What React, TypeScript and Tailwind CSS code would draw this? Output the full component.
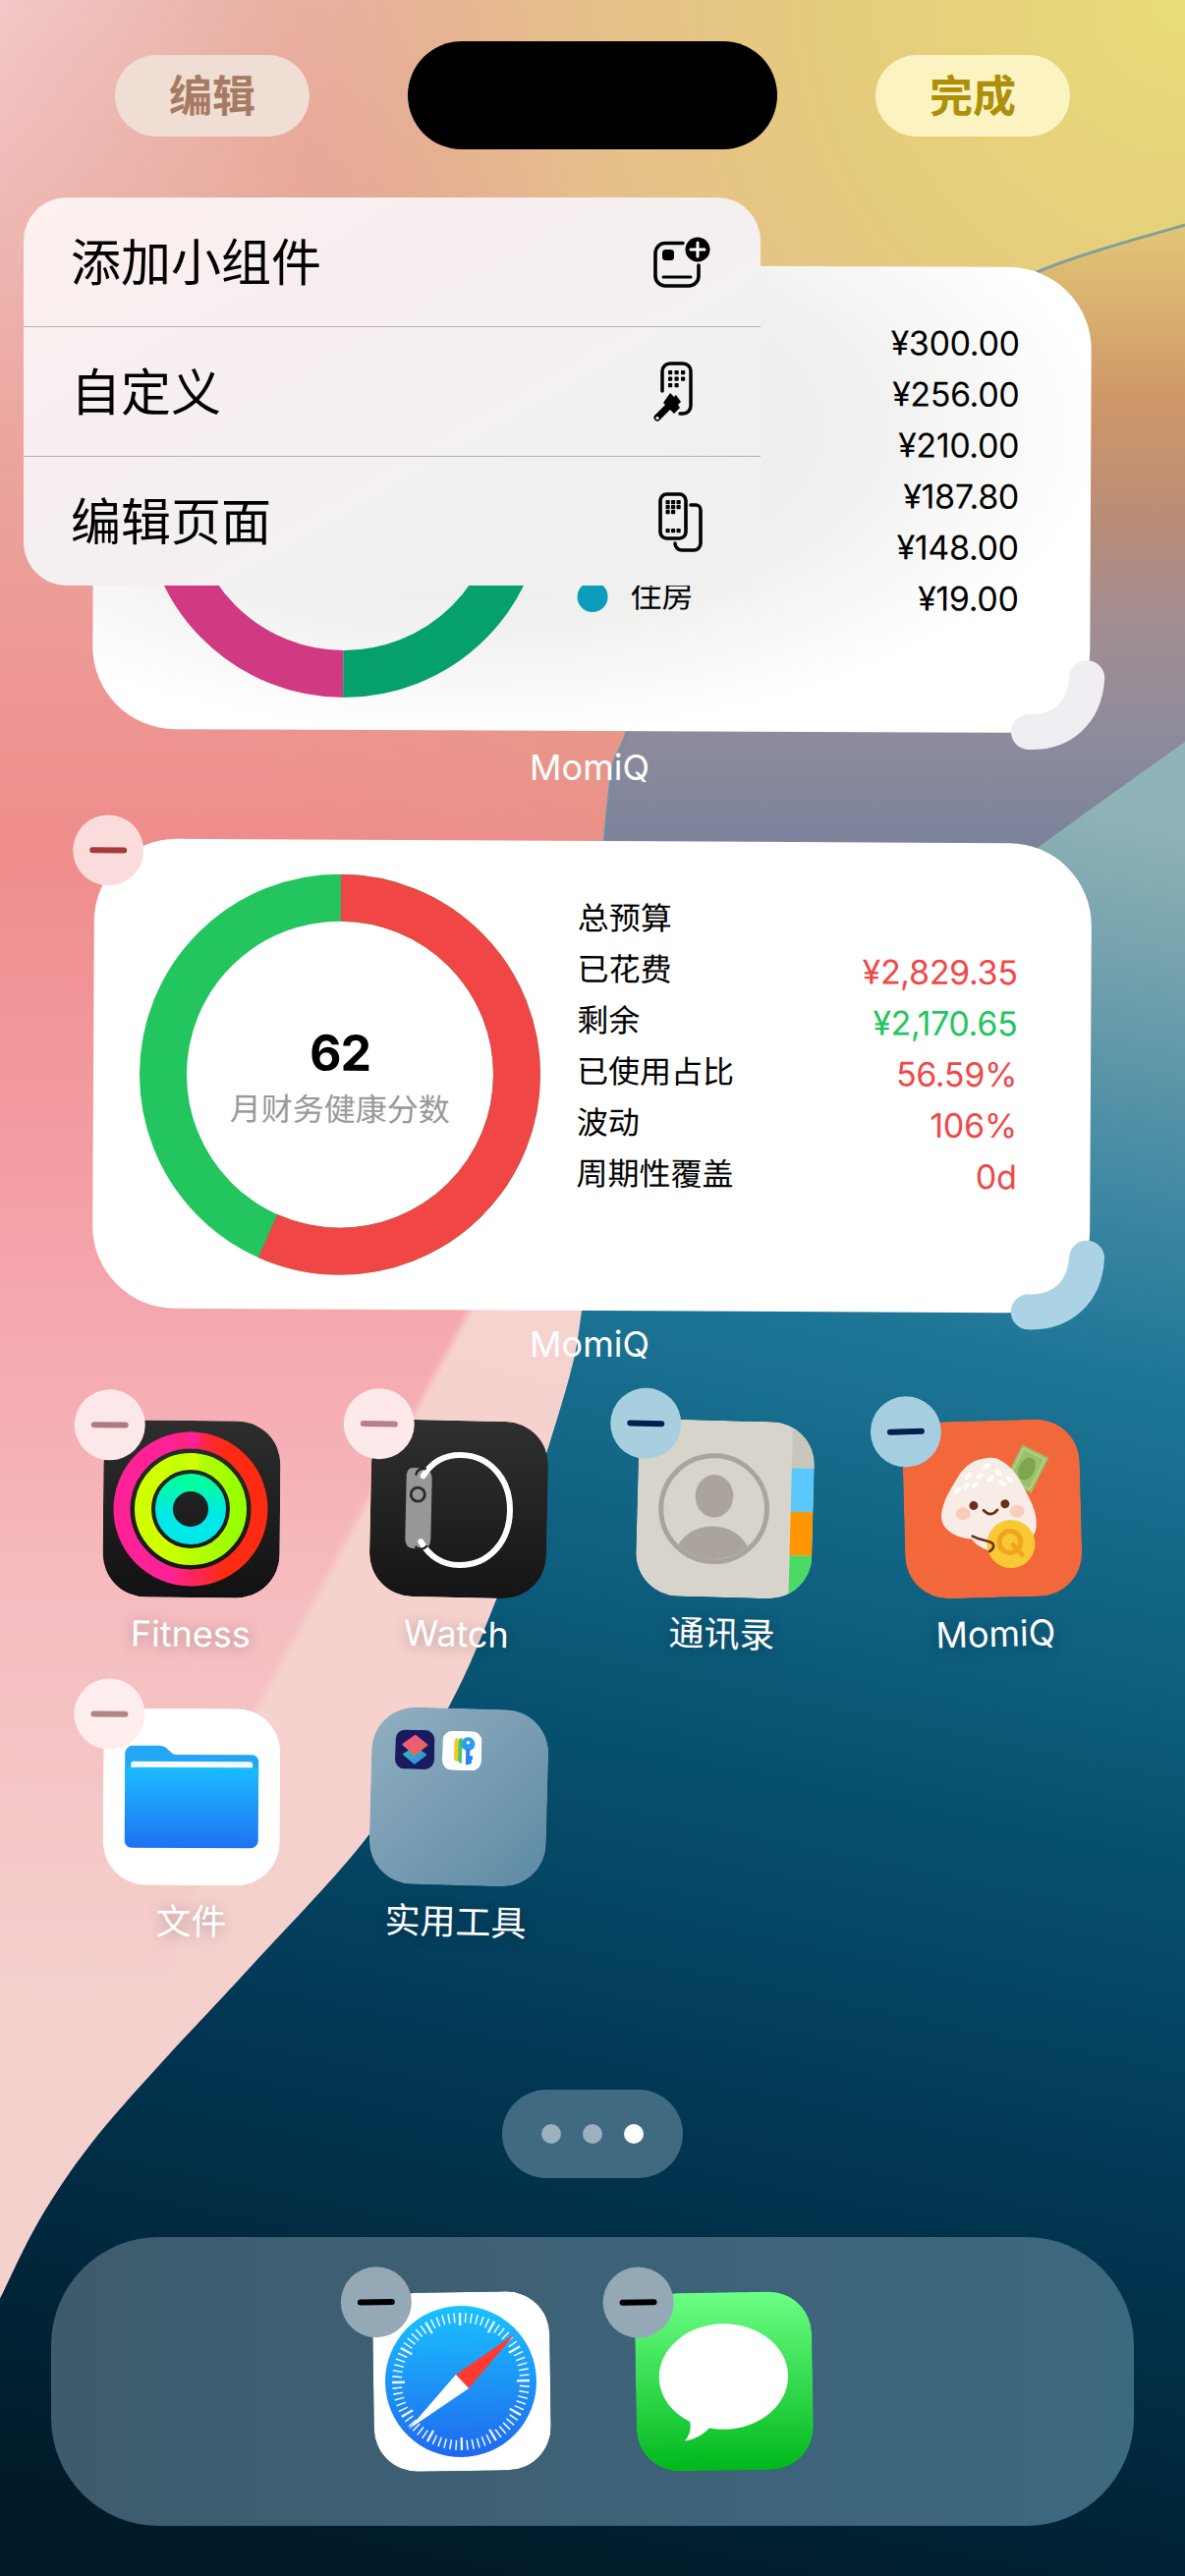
import React from "react";

type Pt = [number, number];

function spline(pts: Pt[]) {
  let d = `M${pts[0][0]} ${pts[0][1]}`;
  for (let i = 0; i < pts.length - 1; i++) {
    const p0 = pts[Math.max(i - 1, 0)];
    const p1 = pts[i];
    const p2 = pts[i + 1];
    const p3 = pts[Math.min(i + 2, pts.length - 1)];
    const c1x = p1[0] + (p2[0] - p0[0]) / 6;
    const c1y = p1[1] + (p2[1] - p0[1]) / 6;
    const c2x = p2[0] - (p3[0] - p1[0]) / 6;
    const c2y = p2[1] - (p3[1] - p1[1]) / 6;
    d += `C${c1x.toFixed(1)} ${c1y.toFixed(1)} ${c2x.toFixed(1)} ${c2y.toFixed(1)} ${p2[0]} ${p2[1]}`;
  }
  return d;
}

const upperEdge: Pt[] = [[1206, 229], [1060, 275], [900, 355], [780, 470], [690, 600], [638, 745], [621, 800], [604, 1000]];
const lowerEdge: Pt[] = [[592, 1335], [580, 1400], [540, 1530], [506, 1626], [457, 1737], [376, 1867], [257, 2000], [164, 2100], [92, 2183], [40, 2260], [0, 2340]];

function Minus({ bg, dash, pos }: { bg: string; dash: string; pos: string }) {
  return (
    <div className={`absolute z-10 flex h-[72px] w-[72px] items-center justify-center rounded-full ${bg} ${pos}`}>
      <div className={`h-[6px] w-[38px] rounded-full ${dash}`} />
    </div>
  );
}

function Handle({ color }: { color: string }) {
  return (
    <svg viewBox="0 0 100 100" className="absolute right-[-18px] bottom-[-24px] h-[100px] w-[100px]">
      <path d="M20 75C54 76 77 55 79 20" fill="none" stroke={color} strokeWidth="36" strokeLinecap="round" />
    </svg>
  );
}

function Wallpaper() {
  const edge = spline([...upperEdge, ...lowerEdge]);
  const deep = spline([[1206, 755], [1060, 860], [900, 980], [700, 1150], [600, 1280], ...lowerEdge]);
  return (
    <svg viewBox="0 0 1206 2622" className="absolute inset-0 h-[2622px] w-[1206px]">
      <defs>
        <linearGradient id="bgBase" x1="0" y1="0" x2="0" y2="2622" gradientUnits="userSpaceOnUse">
          <stop offset="0" stopColor="#f3c9ca" />
          <stop offset="0.16" stopColor="#eba8a0" />
          <stop offset="0.33" stopColor="#ef8c8c" />
          <stop offset="0.5" stopColor="#f5a5ad" />
          <stop offset="0.62" stopColor="#f5bcc0" />
          <stop offset="0.78" stopColor="#f5d1ce" />
          <stop offset="1" stopColor="#f5d1ce" />
        </linearGradient>
        <radialGradient id="bgSun" cx="1206" cy="0" r="1220" gradientUnits="userSpaceOnUse">
          <stop offset="0" stopColor="#e8dc78" />
          <stop offset="0.3" stopColor="#e5cb7d" />
          <stop offset="0.52" stopColor="#e6bf8b" stopOpacity="0.98" />
          <stop offset="0.75" stopColor="#e09a80" stopOpacity="0.55" />
          <stop offset="1" stopColor="#e09a80" stopOpacity="0" />
        </radialGradient>
        <linearGradient id="bgWave" x1="0" y1="229" x2="0" y2="900" gradientUnits="userSpaceOnUse">
          <stop offset="0" stopColor="#e2c676" />
          <stop offset="0.26" stopColor="#cf9868" />
          <stop offset="0.45" stopColor="#b98c78" />
          <stop offset="0.6" stopColor="#a38e92" />
          <stop offset="0.8" stopColor="#8a8a9c" />
          <stop offset="1" stopColor="#75809a" />
        </linearGradient>
        <linearGradient id="bgDeep" x1="900" y1="780" x2="520" y2="2622" gradientUnits="userSpaceOnUse">
          <stop offset="0" stopColor="#8fb3b6" />
          <stop offset="0.08" stopColor="#73a1ad" />
          <stop offset="0.2" stopColor="#3f88a3" />
          <stop offset="0.3" stopColor="#1c7596" />
          <stop offset="0.55" stopColor="#06506f" />
          <stop offset="0.75" stopColor="#023551" />
          <stop offset="1" stopColor="#001a28" />
        </linearGradient>
        <linearGradient id="bgPale" x1="500" y1="1300" x2="300" y2="2100" gradientUnits="userSpaceOnUse">
          <stop offset="0" stopColor="#f6d3cf" />
          <stop offset="1" stopColor="#f5d1ce" />
        </linearGradient>
        <filter id="soft" x="-10%" y="-10%" width="120%" height="120%">
          <feGaussianBlur stdDeviation="3" />
        </filter>
      </defs>
      <rect width="1206" height="2622" fill="url(#bgBase)" />
      <rect width="1206" height="2622" fill="url(#bgSun)" />
      <path d="M560 1180L250 1760L60 2400H700V1180Z" fill="url(#bgPale)" filter="url(#soft)" />
      <path d={`${edge}V2622H1206Z`} fill="url(#bgWave)" />
      <path d={`${deep}V2622H1206Z`} fill="url(#bgDeep)" />
      <path d={spline(upperEdge)} fill="none" stroke="#5f92a8" strokeWidth="3" opacity="0.75" />
    </svg>
  );
}

function FitnessIcon() {
  return (
    <svg viewBox="0 0 180 180" className="h-full w-full">
      <defs>
        <linearGradient id="fitBg" x1="0" y1="0" x2="0" y2="1">
          <stop offset="0" stopColor="#2e2e2e" />
          <stop offset="1" stopColor="#111" />
        </linearGradient>
        <linearGradient id="ringA" x1="0" y1="0" x2="1" y2="0">
          <stop offset="0.35" stopColor="#ff2296" />
          <stop offset="0.75" stopColor="#ff2a12" />
        </linearGradient>
        <linearGradient id="ringB" x1="0" y1="0" x2="1" y2="0">
          <stop offset="0.2" stopColor="#d0ff00" />
          <stop offset="1" stopColor="#98ff00" />
        </linearGradient>
        <linearGradient id="ringC" x1="0" y1="0" x2="0" y2="1">
          <stop offset="0" stopColor="#00ffa0" />
          <stop offset="0.6" stopColor="#00e8e8" />
        </linearGradient>
      </defs>
      <rect width="180" height="180" rx="44" fill="url(#fitBg)" />
      <circle cx="89" cy="90" r="70" fill="none" stroke="url(#ringA)" strokeWidth="17" />
      <circle cx="89" cy="90" r="48.5" fill="none" stroke="url(#ringB)" strokeWidth="17" />
      <circle cx="89" cy="90" r="27" fill="none" stroke="url(#ringC)" strokeWidth="18" />
      <circle cx="90" cy="20" r="8.5" fill="#ff2296" />
      <circle cx="90" cy="41.5" r="8.5" fill="#cfff00" />
      <circle cx="90" cy="63" r="9" fill="#00ffa0" />
    </svg>
  );
}

function WatchIcon() {
  return (
    <svg viewBox="0 0 180 180" className="h-full w-full">
      <defs>
        <linearGradient id="watchBg" x1="0" y1="0" x2="0" y2="1">
          <stop offset="0" stopColor="#303030" />
          <stop offset="1" stopColor="#151515" />
        </linearGradient>
      </defs>
      <rect width="180" height="180" rx="44" fill="url(#watchBg)" />
      <path d="M42 49H50C58 49 62 53 62 60V118C62 128 60 131 52 131H44C39 131 36 127 36 121V58C36 53 38 49 42 49Z" fill="#979797" />
      <circle cx="48" cy="76" r="7" fill="#979797" stroke="#2b2b2b" strokeWidth="2.8" />
      <path d="M53 57C62 42 76 35 91 35C120 35 142 58 142 91C142 124 120 147 91 147C76 147 62 140 52 124" fill="none" stroke="#fff" strokeWidth="6" strokeLinecap="round" />
      <circle cx="53" cy="57" r="7.5" fill="none" stroke="#222" strokeWidth="2.4" strokeDasharray="14 30" strokeDashoffset="-24" />
      <circle cx="52" cy="124" r="7.5" fill="none" stroke="#222" strokeWidth="2.4" strokeDasharray="14 30" strokeDashoffset="-4" />
    </svg>
  );
}

function ContactsIcon() {
  return (
    <svg viewBox="0 0 181 182" className="h-full w-full">
      <defs>
        <clipPath id="ctClip">
          <rect width="181" height="182" rx="44" />
        </clipPath>
        <clipPath id="ctFace">
          <circle cx="79" cy="91" r="52" />
        </clipPath>
      </defs>
      <g clipPath="url(#ctClip)">
        <rect width="181" height="182" fill="#d7d4cb" />
        <rect x="158" y="0" width="23" height="47" fill="#c9c6bc" />
        <rect x="158" y="47" width="23" height="45" fill="#5ac8fa" />
        <rect x="158" y="92" width="23" height="45" fill="#ff9500" />
        <rect x="158" y="137" width="23" height="45" fill="#4cd964" />
      </g>
      <circle cx="79" cy="91" r="54.5" fill="none" stroke="#aaa49c" strokeWidth="5" />
      <ellipse cx="79" cy="78" rx="19.5" ry="22" fill="#aaa49c" />
      <g clipPath="url(#ctFace)">
        <ellipse cx="79" cy="145" rx="40" ry="36" fill="#aaa49c" />
      </g>
    </svg>
  );
}

function MomiIcon() {
  const grains = [
    [85, 46, -30], [66, 56, -40], [78, 56, -30], [97, 53, 30], [108, 60, 35], [89, 59, -30], [101, 64, 30], [64, 66, -40], [73, 65, -35], [55, 70, -40],
  ];
  return (
    <svg viewBox="0 0 180 180" className="h-full w-full">
      <rect width="180" height="180" rx="44" fill="#f2683a" />
      <g transform="rotate(28 126 50)">
        <rect x="111" y="30" width="30" height="40" fill="#9cc06b" />
        <rect x="114" y="33" width="24" height="34" fill="none" stroke="#b9d488" strokeWidth="1.5" />
        <ellipse cx="126" cy="50" rx="8" ry="12" fill="#7ea650" />
      </g>
      <path d="M86 38C102 36 115 52 122 68C130 84 136 96 134 110C132 125 115 133 100 133C88 135 75 130 68 120C50 118 36 108 38 94C40 80 48 68 56 56C64 44 74 39 86 38Z" fill="#f8ede6" />
      {grains.map(([x, y, r], i) => (
        <ellipse key={i} cx={x} cy={y} rx="4" ry="2.2" fill="#fff" transform={`rotate(${r} ${x} ${y})`} />
      ))}
      <ellipse cx="60" cy="94" rx="7.5" ry="6.5" fill="#f9cdbb" />
      <ellipse cx="115" cy="93" rx="7.5" ry="6.5" fill="#f9cdbb" />
      <circle cx="71" cy="86" r="4.5" fill="#6b2f1c" />
      <circle cx="103" cy="85" r="4.5" fill="#6b2f1c" />
      <path d="M81 91Q88 99 95 91" fill="none" stroke="#6b2f1c" strokeWidth="2.8" strokeLinecap="round" />
      <circle cx="108" cy="126" r="24.5" fill="#f9c933" />
      <circle cx="107" cy="124" r="11" fill="none" stroke="#f0a51f" strokeWidth="5" />
      <path d="M110 127L119 137" stroke="#f0a51f" strokeWidth="5" strokeLinecap="round" />
      <path d="M69 117C76 121 82 121 88 124C92 127 90 131 86 133" fill="none" stroke="#6b2f1c" strokeWidth="2.6" strokeLinecap="round" />
    </svg>
  );
}

function FilesIcon() {
  return (
    <svg viewBox="0 0 180 180" className="h-full w-full">
      <defs>
        <linearGradient id="fileFront" x1="0" y1="60" x2="0" y2="142" gradientUnits="userSpaceOnUse">
          <stop offset="0" stopColor="#1bbcff" />
          <stop offset="1" stopColor="#1e72f2" />
        </linearGradient>
      </defs>
      <rect width="180" height="180" rx="44" fill="#fff" />
      <path d="M22 47C22 42 25 38 30 38H56C60 38 63 39 66 42C69 45 71 47 76 47H151C155 47 158 50 158 54V70H22Z" fill="#22a6f5" />
      <rect x="28" y="54" width="124" height="10" rx="3" fill="#f4fbff" />
      <path d="M22 60H158V134C158 139 154 142 150 142H30C25 142 22 139 22 134Z" fill="url(#fileFront)" />
    </svg>
  );
}

function FolderIcon() {
  return (
    <div className="h-full w-full rounded-[44px] bg-gradient-to-br from-[#92afc0] to-[#5d8aa5]">
      <div className="flex gap-[8px] pt-[23px] pl-[24px]">
        <svg viewBox="0 0 40 40" className="h-[40px] w-[40px]">
          <defs>
            <linearGradient id="scTop" x1="0" y1="0" x2="1" y2="1">
              <stop offset="0" stopColor="#f0568f" />
              <stop offset="1" stopColor="#e8694a" />
            </linearGradient>
            <linearGradient id="scBottom" x1="0" y1="0" x2="1" y2="1">
              <stop offset="0" stopColor="#2bc7b5" />
              <stop offset="1" stopColor="#3a7fe8" />
            </linearGradient>
          </defs>
          <rect width="40" height="40" rx="10" fill="#1a1a5e" />
          <path d="M20 18L31 25L20 34L9 25Z" fill="url(#scBottom)" stroke="url(#scBottom)" strokeWidth="2" strokeLinejoin="round" />
          <path d="M20 6L32 15L20 25L8 15Z" fill="url(#scTop)" stroke="url(#scTop)" strokeWidth="2" strokeLinejoin="round" />
        </svg>
        <svg viewBox="0 0 40 40" className="h-[40px] w-[40px]">
          <rect width="40" height="40" rx="10" fill="#fff" />
          <path d="M12 11C12 8 14 7 16 7V31C14 31 12 30 12 28Z" fill="#f8c42c" />
          <path d="M16 11C16 8 18 7 20 7V33C18 33 16 31 16 29Z" fill="#4cc75a" />
          <circle cx="26" cy="13" r="7" fill="#2b9df5" />
          <circle cx="26" cy="11.5" r="1.8" fill="#fff" />
          <path d="M26 18V34M26 27H31M26 31H30" stroke="#2b82f5" strokeWidth="4" />
        </svg>
      </div>
    </div>
  );
}

function SafariIcon() {
  const ticks = Array.from({ length: 72 }, (_, i) => i * 5);
  return (
    <svg viewBox="0 0 180 182" className="h-full w-full">
      <defs>
        <linearGradient id="sfBg" x1="0" y1="0" x2="0" y2="1">
          <stop offset="0" stopColor="#1ac2ff" />
          <stop offset="1" stopColor="#1f68ee" />
        </linearGradient>
      </defs>
      <rect width="180" height="182" rx="44" fill="#fff" />
      <circle cx="89" cy="91" r="77" fill="url(#sfBg)" />
      {ticks.map((a) => (
        <line key={a} x1="89" y1="21" x2="89" y2={a % 30 === 0 ? 34 : 31} stroke="#fff" strokeOpacity="0.9" strokeWidth={a % 30 === 0 ? 2.4 : 1.6} transform={`rotate(${a} 89 91)`} />
      ))}
      <path d="M145 43L84 84L97 98Z" fill="#ff3b30" />
      <path d="M35 139L84 84L97 98Z" fill="#fff" />
    </svg>
  );
}

function MessagesIcon() {
  return (
    <svg viewBox="0 0 181 182" className="h-full w-full">
      <defs>
        <linearGradient id="msgBg" x1="0" y1="0" x2="0" y2="1">
          <stop offset="0" stopColor="#6cff84" />
          <stop offset="1" stopColor="#00b81c" />
        </linearGradient>
      </defs>
      <rect width="181" height="182" rx="44" fill="url(#msgBg)" />
      <ellipse cx="90" cy="86" rx="66" ry="54" fill="#fff" />
      <path d="M52 122C58 136 55 145 49 151C59 150 70 145 78 134Z" fill="#fff" />
    </svg>
  );
}

function AddWidgetIcon() {
  return (
    <svg viewBox="26 8 60 54" className="h-[54px] w-[60px]">
      <path d="M56 15.5H38A10 10 0 0 0 28 25.5V49A10 10 0 0 0 38 59H62A10 10 0 0 0 72 49V38" fill="none" stroke="#000" strokeWidth="3.6" strokeLinecap="round" />
      <rect x="35" y="22" width="12" height="11" rx="3.5" fill="#000" />
      <path d="M36 50H64" stroke="#000" strokeWidth="3" strokeLinecap="round" />
      <circle cx="71" cy="22" r="12.5" fill="#000" />
      <path d="M71 15V29M64 22H78" stroke="#fff" strokeWidth="3" strokeLinecap="round" />
    </svg>
  );
}

function Dots({ xs, ys }: { xs: number[]; ys: number[] }) {
  return (
    <>
      {ys.flatMap((y) => xs.map((x) => <rect key={`${x}-${y}`} x={x} y={y} width="4.2" height="4.2" rx="0.8" fill="#000" />))}
    </>
  );
}

function CustomizeIcon() {
  return (
    <svg viewBox="24 141 44 64" className="h-[64px] w-[44px]">
      <path d="M35 172V152A8 8 0 0 1 43 144H56A8 8 0 0 1 64 152V187A8 8 0 0 1 56 195H53" fill="none" stroke="#000" strokeWidth="3.5" strokeLinecap="round" />
      <Dots xs={[41, 47.5, 54]} ys={[151, 157.5]} />
      <Dots xs={[41, 47.5]} ys={[164]} />
      <path d="M43 174L47 178L49 176L54 183L51 186L53 189L47 195L36 184Z" fill="#000" />
      <path d="M40 189L30 199" stroke="#000" strokeWidth="7" strokeLinecap="round" />
      <circle cx="30" cy="199.5" r="1.6" fill="#fff" />
    </svg>
  );
}

function EditPagesIcon() {
  return (
    <svg viewBox="26 269 48 64" className="h-[64px] w-[48px]">
      <rect x="30" y="273" width="26" height="45" rx="6.5" fill="none" stroke="#000" strokeWidth="3.6" />
      <Dots xs={[35.5, 41, 46.5]} ys={[279, 284]} />
      <Dots xs={[35.5, 41]} ys={[289]} />
      <Dots xs={[35.5, 41, 46.5]} ys={[308]} />
      <path d="M61 284H66A5 5 0 0 1 71 289V323A7 7 0 0 1 64 330H52A7 7 0 0 1 45 323" fill="none" stroke="#000" strokeWidth="3.6" strokeLinecap="round" />
    </svg>
  );
}

const menu = [
  { label: "添加小组件", icon: <AddWidgetIcon />, pad: "pr-[49px] h-[131px]" },
  { label: "自定义", icon: <CustomizeIcon />, pad: "pr-[67px] h-[132px]" },
  { label: "编辑页面", icon: <EditPagesIcon />, pad: "pr-[58px] h-[132px]" },
];

const rowsTop = [
  ["", "¥300.00"],
  ["", "¥256.00"],
  ["", "¥210.00"],
  ["", "¥187.80"],
  ["", "¥148.00"],
  ["住房", "¥19.00"],
];

const rowsBudget = [
  ["总预算", "", ""],
  ["已花费", "¥2,829.35", "text-[#f04848]"],
  ["剩余", "¥2,170.65", "text-[#22c55e]"],
  ["已使用占比", "56.59%", "text-[#f04848]"],
  ["波动", "106%", "text-[#f04848]"],
  ["周期性覆盖", "0d", "text-[#f04848]"],
];

type Tile = { label: string; rotate: string; bg: string; dash: string; pos: string; icon: React.ReactNode; hasMinus: boolean };

const tiles: Tile[] = [
  { label: "Fitness", rotate: "rotate-[0.5deg]", bg: "bg-[#fde8e9]", dash: "bg-[#b07a82]", pos: "-top-[31px] -left-[30px]", icon: <FitnessIcon />, hasMinus: true },
  { label: "Watch", rotate: "rotate-[1.2deg]", bg: "bg-[#fde8ea]", dash: "bg-[#b77f88]", pos: "-top-[31px] -left-[29px]", icon: <WatchIcon />, hasMinus: true },
  { label: "通讯录", rotate: "rotate-[1.5deg]", bg: "bg-[#a8cfe0]", dash: "bg-[#02214e]", pos: "-top-[31px] -left-[29px]", icon: <ContactsIcon />, hasMinus: true },
  { label: "MomiQ", rotate: "-rotate-[1.5deg]", bg: "bg-[#a5cfe0]", dash: "bg-[#02214e]", pos: "-top-[27px] -left-[32px]", icon: <MomiIcon />, hasMinus: true },
  { label: "文件", rotate: "rotate-[0.3deg]", bg: "bg-[#fdeeed]", dash: "bg-[#b28783]", pos: "-top-[30px] -left-[30px]", icon: <FilesIcon />, hasMinus: true },
  { label: "实用工具", rotate: "rotate-[1.5deg]", bg: "", dash: "", pos: "", icon: <FolderIcon />, hasMinus: false },
];

function AppTile({ t }: { t: Tile }) {
  return (
    <div className={`relative h-[293px] w-[180px] origin-[90px_90px] ${t.rotate}`}>
      {t.hasMinus && <Minus bg={t.bg} dash={t.dash} pos={t.pos} />}
      <div className="h-[180px] w-[180px] overflow-hidden rounded-[44px]">{t.icon}</div>
      <div className="mt-[17px] -mx-[40px] text-center text-[36px] leading-[40px] text-white [text-shadow:0_2px_14px_rgba(0,0,0,0.28)]">{t.label}</div>
    </div>
  );
}

function Dock({ children, rotate, pos }: { children: React.ReactNode; rotate: string; pos: string }) {
  return (
    <div className={`relative h-[182px] w-[180px] ${rotate}`}>
      <Minus bg="bg-[#94a8b6]" dash="bg-black" pos={pos} />
      <div className="h-[182px] w-[180px] overflow-hidden rounded-[44px]">{children}</div>
    </div>
  );
}

export default function App() {
  return (
    <div className="relative h-[2622px] w-[1206px] overflow-hidden [font-family:Inter,'Noto_Sans_CJK_SC',sans-serif]">
      <Wallpaper />
      <div className="relative">
        <div className="flex items-center gap-[100px] pt-[42px] pl-[117px]">
          <div className="flex h-[83px] w-[198px] items-center justify-center rounded-full bg-[#f0ddd3] pt-[2px] text-[44px] font-bold text-[#a77b63]">编辑</div>
          <div className="h-[110px] w-[376px] rounded-full bg-black" />
          <div className="flex h-[83px] w-[198px] items-center justify-center rounded-full bg-[#fbf4c2] pt-[2px] text-[44px] font-bold text-[#ad8f08]">完成</div>
        </div>

        <div className="relative mt-[118px] ml-[95px] h-[474px] w-[1015px] rotate-[0.25deg] rounded-[84px] bg-[radial-gradient(ellipse_at_38%_35%,#ecedeb_0%,#f0f0ef_45%,#ffffff_72%)]">
          <Handle color="#f0eef2" />
          <div className="flex pt-[33px] pl-[51px]">
            <svg viewBox="0 0 408 408" className="h-[408px] w-[408px] shrink-0">
              <path d="M204 24A180 180 0 0 1 204 384" fill="none" stroke="#06a06c" strokeWidth="48" />
              <path d="M204 384A180 180 0 0 1 204 24" fill="none" stroke="#d03a83" strokeWidth="48" />
            </svg>
            <div className="mt-[18px] ml-[34px] w-[449px]">
              {rowsTop.map(([l, v]) => (
                <div key={v} className="flex h-[52px] items-center justify-between text-[32px] text-black">
                  <div className="flex items-center">
                    {l && <div className="h-[31px] w-[31px] rounded-full bg-[#0c9dbb]" />}
                    {l && <span className="ml-[23px]">{l}</span>}
                  </div>
                  <span className="text-[34px] tracking-[-0.01em]">{v}</span>
                </div>
              ))}
            </div>
          </div>
        </div>
        <div className="mt-[17px] h-[40px] pr-[6px] text-center text-[36px] leading-[40px] text-white">MomiQ</div>

        <div className="relative mt-[55px] ml-[95px] h-[478px] w-[1015px] rotate-[0.3deg] rounded-[84px] bg-white">
          <Minus bg="bg-[#fbdcdc]" dash="bg-[#a23c3c]" pos="-top-[24px] -left-[22px]" />
          <Handle color="#acd3e5" />
          <div className="flex pt-[35px] pl-[47px]">
            <div className="relative h-[408px] w-[408px] shrink-0">
              <svg viewBox="0 0 408 408" className="h-[408px] w-[408px] -rotate-90">
                <circle cx="204" cy="204" r="180" fill="none" stroke="#22c55e" strokeWidth="48" />
                <circle cx="204" cy="204" r="180" fill="none" stroke="#f04646" strokeWidth="48" strokeDasharray="640 1131" />
              </svg>
              <div className="absolute inset-0 flex flex-col items-center justify-center pt-[6px]">
                <div className="text-[50px] leading-[60px] font-bold tracking-[-0.02em] text-black">62</div>
                <div className="mt-[6px] text-[32px] leading-[44px] text-[#999999]">月财务健康分数</div>
              </div>
            </div>
            <div className="mt-[18px] ml-[37px] w-[448px]">
              {rowsBudget.map(([l, v, c]) => (
                <div key={l} className="flex h-[52px] items-center justify-between text-[32px] text-black">
                  <span>{l}</span>
                  <span className={`text-[34px] tracking-[-0.01em] ${c}`}>{v}</span>
                </div>
              ))}
            </div>
          </div>
        </div>
        <div className="mt-[14px] h-[40px] pr-[6px] text-center text-[36px] leading-[40px] text-white">MomiQ</div>

        <div className="mt-[58px] ml-[105px] grid w-[1000px] grid-cols-[repeat(4,180px)] gap-x-[91.500px]">
          {tiles.map((t) => (
            <AppTile key={t.label} t={t} />
          ))}
        </div>

        <div className="mt-[95px] ml-[511px] flex h-[90px] w-[184px] items-center justify-center gap-[22px] rounded-full bg-[#3f6a82]">
          <div className="h-[20px] w-[20px] rounded-full bg-[#9cb0bd]" />
          <div className="h-[20px] w-[20px] rounded-full bg-[#9cb0bd]" />
          <div className="h-[20px] w-[20px] rounded-full bg-white" />
        </div>

        <div className="mt-[60px] ml-[52px] flex h-[294px] w-[1102px] gap-[87px] rounded-[110px] bg-gradient-to-r from-[#3e5b6d] to-[#3c6880] pt-[56px] pl-[328px]">
          <Dock rotate="-rotate-[0.8deg]" pos="-top-[27px] -left-[32px]"><SafariIcon /></Dock>
          <Dock rotate="-rotate-[1deg]" pos="-top-[27px] -left-[32px]"><MessagesIcon /></Dock>
        </div>

        <div className="absolute top-[201px] left-[24px] w-[750px] overflow-hidden rounded-[44px] bg-[linear-gradient(150deg,#fdf0ee_0%,#f7eef0_35%,#f3f1f0_65%,#f0f0ee_100%)]">
          {menu.map((m, i) => (
            <div key={m.label} className={`flex items-center justify-between pl-[48px] text-[51px] text-black ${m.pad} ${i > 0 ? "border-t border-[#b8b3b3]" : ""}`}>
              <span className="pt-[3px]">{m.label}</span>
              {m.icon}
            </div>
          ))}
        </div>
      </div>
    </div>
  );
}
